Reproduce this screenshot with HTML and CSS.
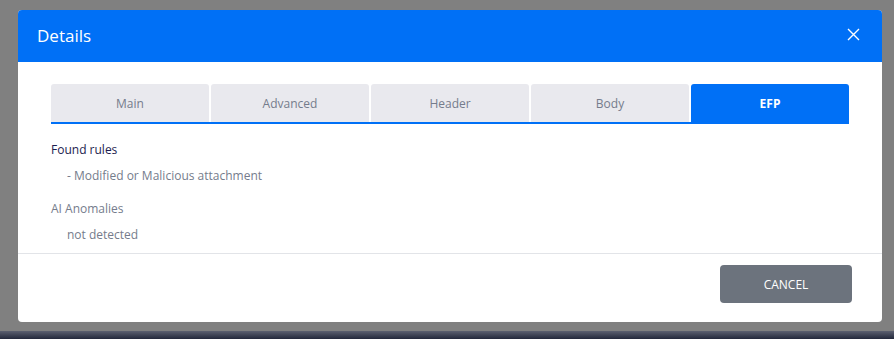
FILE: index.html
```html
<!DOCTYPE html>
<html lang="en">
<head>
    <meta charset="UTF-8">
    <title>Details</title>
    <link rel="stylesheet" href="styles.css">
</head>
<body>
    <div class="modal">
        <div class="modal-header">
            <div class="modal-title">Details</div>
            <button class="close-btn" aria-label="Close">
                <svg width="13" height="13" viewBox="0 0 13 13">
                    <path d="M1 1L12 12M12 1L1 12" stroke="#fff" stroke-width="1.4" fill="none"/>
                </svg>
            </button>
        </div>
        <div class="modal-body">
            <div class="tabs">
                <div class="tab">Main</div>
                <div class="tab">Advanced</div>
                <div class="tab">Header</div>
                <div class="tab">Body</div>
                <div class="tab active">EFP</div>
            </div>
            <div class="section">
                <div class="section-title found">Found rules</div>
                <div class="section-item">- Modified or Malicious attachment</div>
                <div class="section-title">AI Anomalies</div>
                <div class="section-item">not detected</div>
            </div>
        </div>
        <div class="modal-footer">
            <button class="cancel-btn">CANCEL</button>
        </div>
    </div>
    <div class="page-strip"></div>
</body>
</html>
```

FILE: styles.css
```css
* {
    margin: 0;
    padding: 0;
    box-sizing: border-box;
    font-family: 'Open Sans', 'Noto Sans', sans-serif;
}

body {
    background-color: #808080;
    width: 894px;
    height: 339px;
    overflow: hidden;
    padding: 10px 12px 0 18px;
}

.modal {
    width: 864px;
    background-color: #ffffff;
    border-radius: 4px;
    overflow: hidden;
}

.modal-header {
    height: 52px;
    background-color: #0070f6;
    display: flex;
    align-items: center;
    justify-content: space-between;
    padding: 0 22px 2px 19px;
}

.modal-title {
    color: #ffffff;
    font-size: 17px;
    font-weight: 400;
}

.close-btn {
    background: none;
    border: none;
    display: flex;
    cursor: pointer;
    margin-top: -1px;
}

.modal-body {
    padding: 22px 33px 8px 33px;
    border-bottom: 1px solid #e2e4e8;
}

.tabs {
    display: flex;
    gap: 2px;
    border-bottom: 2px solid #0070f6;
}

.tab {
    flex: 1;
    height: 38px;
    display: flex;
    align-items: center;
    justify-content: center;
    background-color: #e9e9ee;
    border-radius: 3px 3px 0 0;
    font-size: 12px;
    font-weight: 500;
    color: #757c8c;
}

.tab.active {
    background-color: #0070f6;
    color: #ffffff;
    font-weight: 700;
}

.section {
    padding-top: 17px;
}

.section-title {
    font-size: 12px;
    font-weight: 500;
    color: #757c8c;
    line-height: 17px;
    margin-bottom: 9px;
}

.section-title.found {
    color: #1d1d4f;
}

.section-item {
    font-size: 12px;
    font-weight: 500;
    color: #757c8c;
    line-height: 17px;
    padding-left: 16px;
    margin-bottom: 16px;
}

.section-item:last-child {
    margin-bottom: 2px;
}

.modal-footer {
    display: flex;
    justify-content: flex-end;
    padding: 11px 30px 19px 0;
}

.cancel-btn {
    width: 132px;
    height: 38px;
    background-color: #6c737d;
    border: none;
    border-radius: 4px;
    color: #ffffff;
    font-size: 12px;
    font-weight: 500;
    cursor: pointer;
}

.page-strip {
    position: absolute;
    left: 0;
    right: 0;
    top: 331px;
    height: 8px;
    background: linear-gradient(to bottom, #5c6070, #23283b);
}
```
